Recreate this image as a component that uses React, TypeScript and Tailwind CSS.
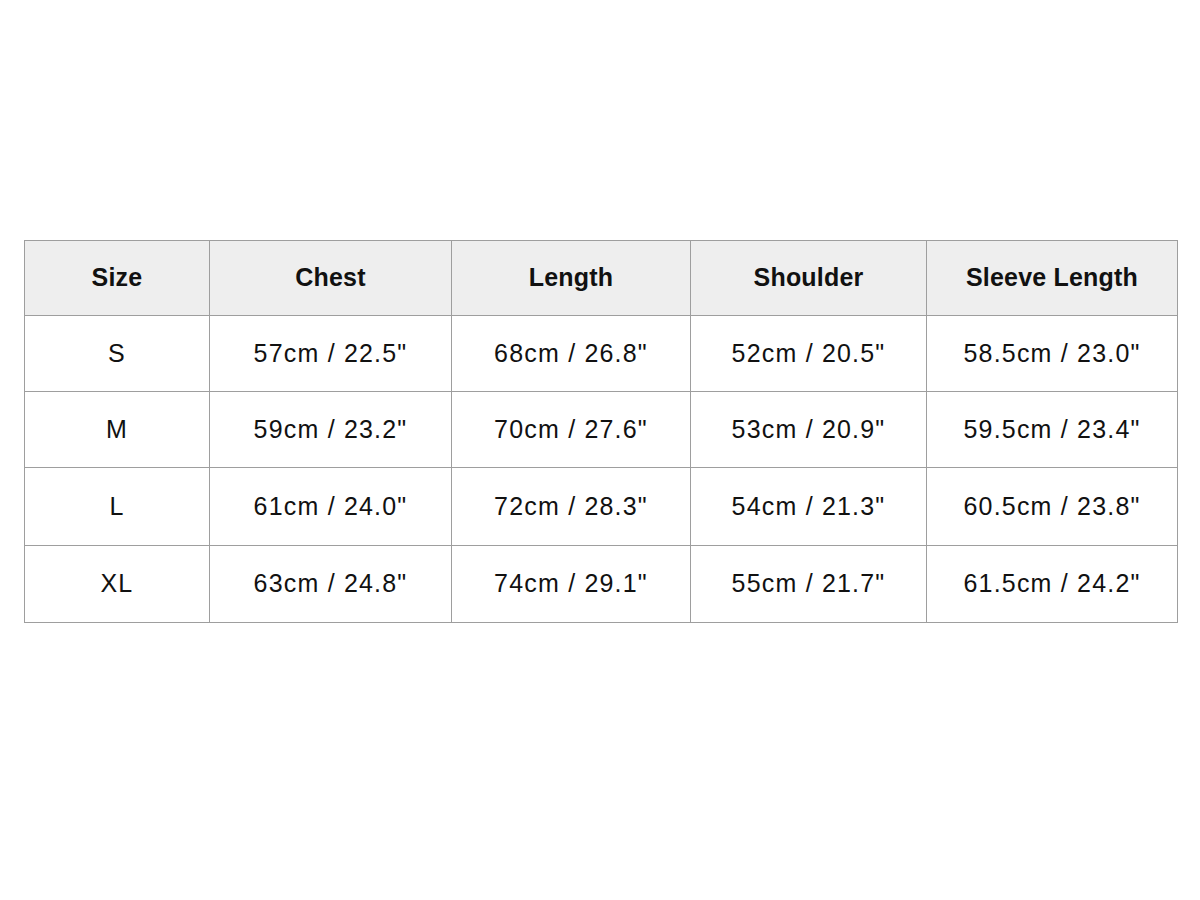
import React from "react";

const headers = ["Size", "Chest", "Length", "Shoulder", "Sleeve Length"];

const rows = [
  { h: "h-[76px]", cells: ["S", '57cm / 22.5"', '68cm / 26.8"', '52cm / 20.5"', '58.5cm / 23.0"'] },
  { h: "h-[76px]", cells: ["M", '59cm / 23.2"', '70cm / 27.6"', '53cm / 20.9"', '59.5cm / 23.4"'] },
  { h: "h-[78px]", cells: ["L", '61cm / 24.0"', '72cm / 28.3"', '54cm / 21.3"', '60.5cm / 23.8"'] },
  { h: "h-[77px]", cells: ["XL", '63cm / 24.8"', '74cm / 29.1"', '55cm / 21.7"', '61.5cm / 24.2"'] },
];

export default function App() {
  return (
    <div className="w-[1200px] h-[900px] bg-white pt-[240px] pl-6 font-['Liberation_Sans',Arial,sans-serif] text-[#111]">
      <table className="table-fixed border-collapse w-[1153px] border-[1.5px] border-[#9e9e9e]">
        <colgroup>
          <col className="w-[185px]" />
          <col className="w-[242px]" />
          <col className="w-[239px]" />
          <col className="w-[236px]" />
          <col className="w-[251px]" />
        </colgroup>
        <thead>
          <tr className="h-[75px] bg-[#eeeeee]">
            {headers.map((h) => (
              <th
                key={h}
                className="border-[1.5px] border-[#9e9e9e] text-center text-[25px] font-bold tracking-[0.2px]"
              >
                {h}
              </th>
            ))}
          </tr>
        </thead>
        <tbody>
          {rows.map((row) => (
            <tr key={row.cells[0]} className={row.h}>
              {row.cells.map((cell, i) => (
                <td
                  key={i}
                  className="border-[1.5px] border-[#9e9e9e] text-center text-[25px] tracking-[1.2px]"
                >
                  {cell}
                </td>
              ))}
            </tr>
          ))}
        </tbody>
      </table>
    </div>
  );
}
